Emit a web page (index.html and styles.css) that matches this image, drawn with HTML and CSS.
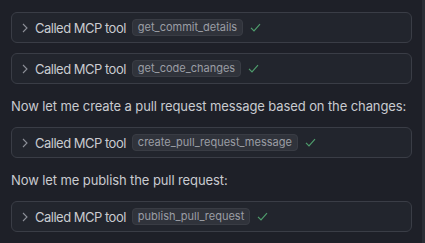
FILE: index.html
```html
<!DOCTYPE html>
<html lang="en">
<head>
  <meta charset="UTF-8" />
  <meta name="viewport" content="width=device-width, initial-scale=1.0"/>
  <title>Chat</title>
  <link rel="stylesheet" href="styles.css">
</head>
<body>
  <div class="scroll">
    <div class="chat">
      <div class="tool-call">
        <svg class="chevron" width="6" height="10" viewBox="0 0 6 10"><path d="M1 1l4 4-4 4" fill="none" stroke="currentColor" stroke-width="1.1"/></svg>
        <span class="label">Called MCP tool</span>
        <span class="pill">get_commit_details</span>
        <svg class="check" width="11" height="9" viewBox="0 0 11 9"><path d="M1 4.8l3 3 6-6.6" fill="none" stroke="currentColor" stroke-width="1.2"/></svg>
      </div>
      <div class="tool-call">
        <svg class="chevron" width="6" height="10" viewBox="0 0 6 10"><path d="M1 1l4 4-4 4" fill="none" stroke="currentColor" stroke-width="1.1"/></svg>
        <span class="label">Called MCP tool</span>
        <span class="pill">get_code_changes</span>
        <svg class="check" width="11" height="9" viewBox="0 0 11 9"><path d="M1 4.8l3 3 6-6.6" fill="none" stroke="currentColor" stroke-width="1.2"/></svg>
      </div>
      <p class="msg">Now let me create a pull request message based on the changes:</p>
      <div class="tool-call">
        <svg class="chevron" width="6" height="10" viewBox="0 0 6 10"><path d="M1 1l4 4-4 4" fill="none" stroke="currentColor" stroke-width="1.1"/></svg>
        <span class="label">Called MCP tool</span>
        <span class="pill">create_pull_request_message</span>
        <svg class="check" width="11" height="9" viewBox="0 0 11 9"><path d="M1 4.8l3 3 6-6.6" fill="none" stroke="currentColor" stroke-width="1.2"/></svg>
      </div>
      <p class="msg">Now let me publish the pull request:</p>
      <div class="tool-call">
        <svg class="chevron" width="6" height="10" viewBox="0 0 6 10"><path d="M1 1l4 4-4 4" fill="none" stroke="currentColor" stroke-width="1.1"/></svg>
        <span class="label">Called MCP tool</span>
        <span class="pill">publish_pull_request</span>
        <svg class="check" width="11" height="9" viewBox="0 0 11 9"><path d="M1 4.8l3 3 6-6.6" fill="none" stroke="currentColor" stroke-width="1.2"/></svg>
      </div>
    </div>
    <div class="scrollbar"></div>
  </div>
</body>
</html>
```

FILE: styles.css
```css
body {
  margin: 0;
  background: #1e2028;
  color: #c9cbd0;
  font-family: Inter, "Noto Sans", sans-serif;
  font-size: 13px;
  height: 243px;
  overflow: hidden;
}

.scroll {
  display: flex;
  height: 100%;
}

.chat {
  flex: 1;
  display: flex;
  flex-direction: column;
  gap: 10px;
  padding: 12px 10px 0 11px;
}

.tool-call {
  flex-shrink: 0;
  display: flex;
  align-items: center;
  height: 29px;
  padding: 0 10px;
  background: #22252d;
  border: 1px solid #3a3d46;
  border-radius: 6px;
}

.chevron {
  color: #8d9098;
  margin-right: 7px;
}

.label {
  color: #c9cbd0;
  letter-spacing: -0.5px;
}

.pill {
  margin-left: 6px;
  padding: 0 5px;
  height: 15px;
  line-height: 15px;
  font-size: 11px;
  color: #9b9ea5;
  background: #30333b;
  border: 1px solid #393c44;
  border-radius: 4px;
}

.check {
  color: #4e9c6c;
  margin-left: 7px;
}

.msg {
  flex-shrink: 0;
  margin: 2px 0 0;
  line-height: 21px;
  letter-spacing: -0.1px;
  white-space: nowrap;
  color: #c9cbd0;
}

.scrollbar {
  width: 3px;
  background: #2a2d35;
}
```
